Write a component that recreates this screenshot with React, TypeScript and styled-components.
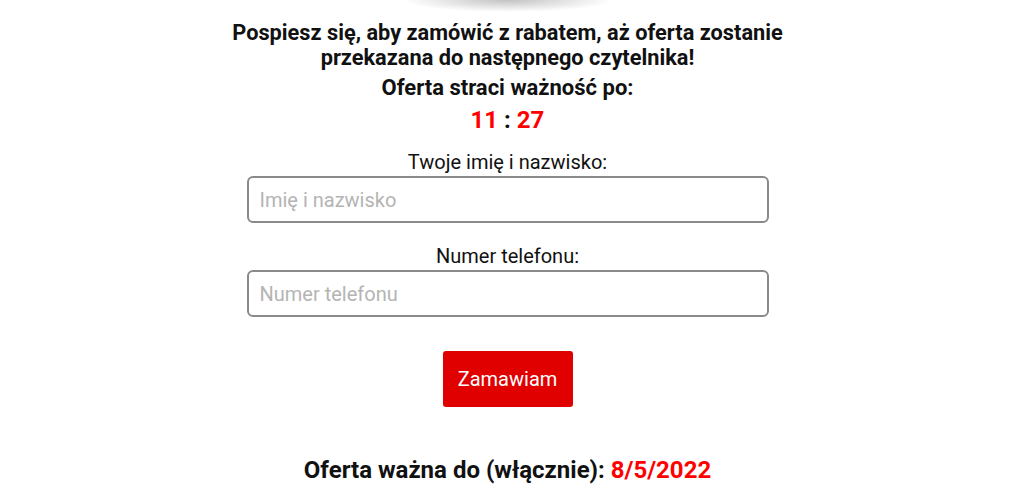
import React from 'react';
import styled, { createGlobalStyle } from 'styled-components';

const GlobalStyle = createGlobalStyle`
  body {
    margin: 0;
    background: #fff;
    font-family: Roboto, "Liberation Sans", Arial, sans-serif;
    color: #111;
  }
`;

const Page = styled.div`
  display: flex;
  flex-direction: column;
  align-items: center;
  text-align: center;
  padding-right: 9px;
`;

const TopShadow = styled.div`
  width: 210px;
  height: 12px;
  background: radial-gradient(ellipse 50% 100% at 50% 0%, rgba(0, 0, 0, 0.24), rgba(0, 0, 0, 0) 100%);
`;

const Heading = styled.h2`
  margin: 8px 0 0;
  font-size: 21.75px;
  line-height: 25px;
  font-weight: 700;
  max-width: 600px;
`;

const Expires = styled.div`
  margin-top: 3px;
  font-size: 22px;
  line-height: 30px;
  font-weight: 700;
`;

const Timer = styled.div`
  margin-top: 2px;
  font-size: 24px;
  line-height: 30px;
  font-weight: 700;
  color: #111;
`;

const Red = styled.span`
  color: #ff0000;
`;

const Form = styled.form`
  margin-top: 15px;
  width: 522px;
  display: flex;
  flex-direction: column;
  align-items: center;
`;

const Field = styled.label<{ $gap?: number }>`
  display: flex;
  flex-direction: column;
  align-items: center;
  width: 100%;
  margin-top: ${({ $gap }) => $gap ?? 0}px;
  font-size: 20px;
  line-height: 24px;
`;

const Input = styled.input`
  box-sizing: border-box;
  margin-top: 2px;
  width: 100%;
  height: 47px;
  padding: 0 11px;
  border: 2px solid #8a8a8a;
  border-radius: 6px;
  font-family: inherit;
  font-size: 20px;
  color: #333;
  outline: none;

  &::placeholder {
    color: #b4b4b4;
  }
`;

const Submit = styled.button`
  margin-top: 34px;
  width: 130px;
  height: 56px;
  border: none;
  border-radius: 3px;
  background: #e00000;
  color: #fff;
  font-family: inherit;
  font-size: 20px;
  cursor: pointer;
`;

const ValidUntil = styled.div`
  margin-top: 48px;
  font-size: 24px;
  line-height: 30px;
  font-weight: 700;
`;

const App = () => (
  <>
    <GlobalStyle />
    <Page>
      <TopShadow />
      <Heading>
        Pospiesz się, aby zamówić z rabatem, aż oferta zostanie
        <br />
        przekazana do następnego czytelnika!
      </Heading>
      <Expires>Oferta straci ważność po:</Expires>
      <Timer>
        <Red>11</Red> : <Red>27</Red>
      </Timer>
      <Form onSubmit={(e) => e.preventDefault()}>
        <Field>
          Twoje imię i nazwisko:
          <Input placeholder="Imię i nazwisko" />
        </Field>
        <Field $gap={21}>
          Numer telefonu:
          <Input placeholder="Numer telefonu" />
        </Field>
        <Submit type="submit">Zamawiam</Submit>
      </Form>
      <ValidUntil>
        Oferta ważna do (włącznie): <Red>8/5/2022</Red>
      </ValidUntil>
    </Page>
  </>
);

export default App;
